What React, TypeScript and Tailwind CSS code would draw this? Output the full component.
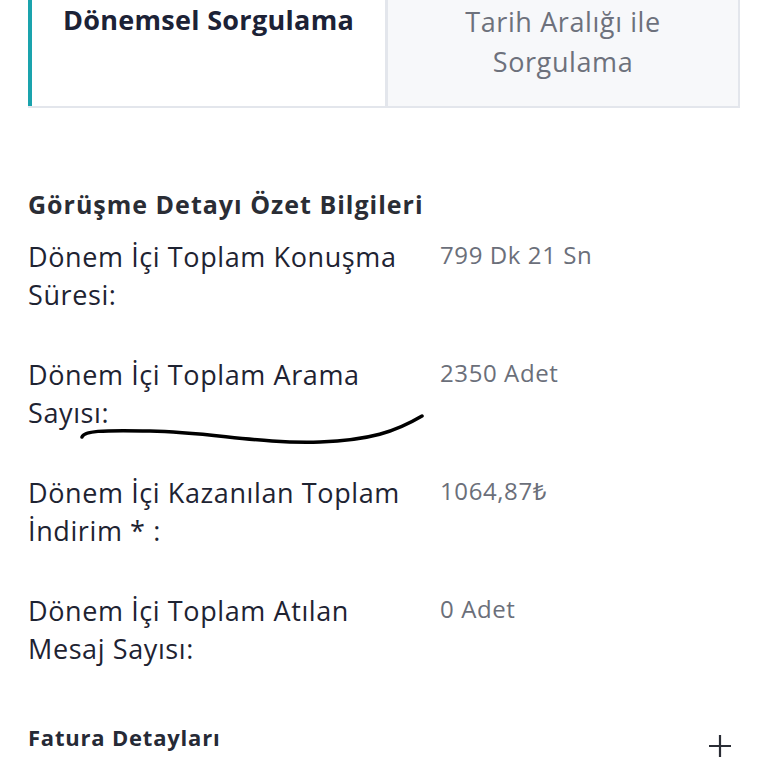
import React from "react";

const rows = [
  { label: ["Dönem İçi Toplam Konuşma", "Süresi:"], value: "799 Dk 21 Sn" },
  { label: ["Dönem İçi Toplam Arama", "Sayısı:"], value: "2350 Adet" },
  { label: ["Dönem İçi Kazanılan Toplam", "İndirim * :"], value: "1064,87₺" },
  { label: ["Dönem İçi Toplam Atılan", "Mesaj Sayısı:"], value: "0 Adet" },
];

export default function App() {
  return (
    <div className="relative h-[768px] w-[768px] overflow-hidden bg-white font-['Open_Sans','Noto_Sans',sans-serif] text-[#1e2332]">
      <div className="mx-[28px] -mt-[20px] flex h-[128px] border-b-2 border-[#e3e6ec]">
        <div className="flex w-[357px] justify-center border-l-[4px] border-[#1aa3ad] pt-[20px]">
          <p className="text-[27px] font-bold leading-[40px] tracking-[0.3px] text-[#1c2236]">Dönemsel Sorgulama</p>
        </div>
        <div className="w-[3px] bg-[#e3e6ec]" />
        <div className="flex flex-1 justify-center border-r-2 border-[#e3e6ec] bg-[#f7f8fa] pt-[22px]">
          <p className="text-center text-[27px] leading-[40px] tracking-[0.6px] text-[#6d717c]">
            Tarih Aralığı ile
            <br />
            Sorgulama
          </p>
        </div>
      </div>

      <div className="px-[28px] pt-[80px]">
        <h2 className="text-[25px] font-bold leading-[32px] tracking-[1px] text-[#2a2d35]">Görüşme Detayı Özet Bilgileri</h2>
        <div className="mt-[18px] flex flex-col gap-[42px]">
          {rows.map((r) => (
            <div key={r.value} className="flex">
              <p className="w-[412px] text-[27px] leading-[38px] tracking-[0.6px] text-[#1e2332]">
                {r.label[0]}
                <br />
                {r.label[1]}
              </p>
              <p className="text-[24px] leading-[34px] tracking-[0.6px] text-[#6b6f7a]">{r.value}</p>
            </div>
          ))}
        </div>
        <div className="mt-[54px] flex items-start justify-between">
          <p className="text-[22px] font-bold leading-[30px] tracking-[0.8px] text-[#262a36]">Fatura Detayları</p>
          <svg width="24" height="24" viewBox="0 0 24 24" className="mr-[8px] mt-[12px]">
            <path d="M12 1v22M1 12h22" stroke="#2a2d35" strokeWidth="2.2" />
          </svg>
        </div>
      </div>

      <svg className="pointer-events-none absolute left-0 top-0" width="768" height="768">
        <path
          d="M82 437 C84 431 100 430 150 431 C210 432 260 444 320 442 C370 440 395 432 422 416"
          fill="none"
          stroke="#000"
          strokeWidth="3.5"
          strokeLinecap="round"
        />
      </svg>
    </div>
  );
}
